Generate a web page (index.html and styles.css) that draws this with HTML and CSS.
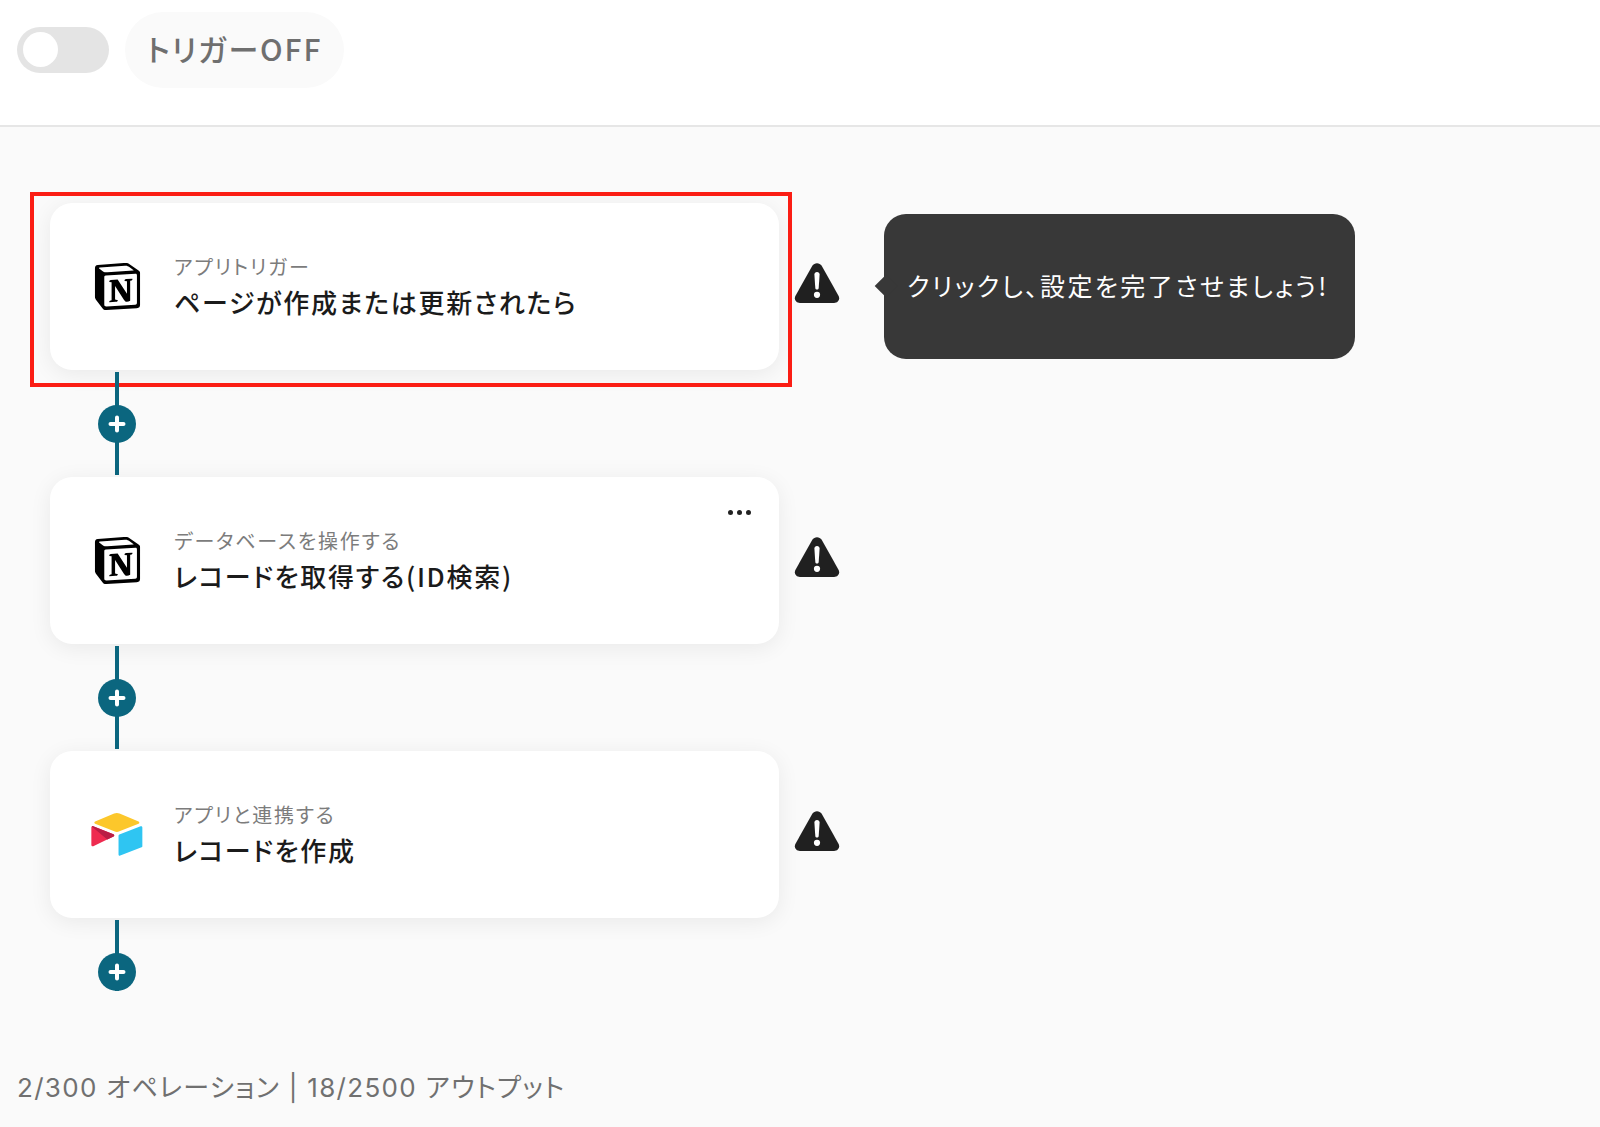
FILE: index.html
```html
<!DOCTYPE html>
<html lang="ja">
<head>
<meta charset="utf-8">
<title>フロー</title>
<link rel="stylesheet" href="styles.css">
</head>
<body>
<svg class="defs" width="0" height="0" aria-hidden="true">
  <symbol id="notion" viewBox="0 0 24 24"><path fill="#000" d="M4.459 4.208c.746.606 1.026.56 2.428.466l13.215-.793c.28 0 .047-.28-.046-.326L17.86 1.968c-.42-.326-.981-.7-2.055-.607L3.01 2.295c-.466.046-.56.28-.374.466zm.793 3.08v13.904c0 .747.373 1.027 1.214.98l14.523-.84c.841-.046.935-.56.935-1.167V6.354c0-.606-.233-.933-.748-.887l-15.177.887c-.56.047-.747.327-.747.933zm14.337.745c.093.42 0 .84-.42.888l-.7.14v10.264c-.608.327-1.168.514-1.635.514-.748 0-.935-.234-1.495-.933l-4.577-7.186v6.952L12.21 19s0 .84-1.168.84l-3.222.186c-.093-.186 0-.653.327-.746l.84-.233V9.854L7.822 9.76c-.094-.42.14-1.026.793-1.073l3.456-.233 4.764 7.279v-6.44l-1.215-.14c-.093-.514.28-.887.747-.933zM1.936 1.035l13.31-.98c1.634-.14 2.055-.047 3.082.7l4.249 2.986c.7.513.934.653.934 1.213v16.378c0 1.026-.373 1.634-1.68 1.726l-15.458.934c-.98.047-1.448-.093-1.962-.747l-3.129-4.06c-.56-.747-.793-1.306-.793-1.96V2.667c0-.839.374-1.54 1.447-1.632z"/></symbol>
  <symbol id="warn" viewBox="0 0 46 46"><path fill="#202020" d="M18.300 2.800c2.100-3.500 7.300-3.500 9.400 0l16.800 30c1.900 3.500-.5 7.200-4.400 7.200H5.900c-3.900 0-6.300-3.700-4.400-7.200z"/><path fill="#fff" d="M20.400 11.500c0-1.500 1.100-2.600 2.600-2.600s2.600 1.100 2.600 2.600l-.9 13.500c-.1 1-.8 1.500-1.700 1.500s-1.600-.5-1.700-1.500z"/><circle fill="#fff" cx="23" cy="31.800" r="3.100"/></symbol>
  <symbol id="plus" viewBox="0 0 38 38"><circle cx="19" cy="19" r="19" fill="#0b667f"/><path d="M19 12.500v13M12.500 19h13" stroke="#fff" stroke-width="4" stroke-linecap="round" fill="none"/></symbol>
</svg>

<header class="topbar">
  <div class="toggle"><span class="knob"></span></div>
  <div class="status-pill">トリガーOFF</div>
</header>

<main class="canvas">
  <section class="flow">
    <div class="step">
      <div class="card card-selected">
        <div class="card-icon"><svg class="logo-notion"><use href="#notion"/></svg></div>
        <div class="card-text">
          <div class="card-sub">アプリトリガー</div>
          <div class="card-title">ページが作成または更新されたら</div>
        </div>
      </div>
      <svg class="warn"><use href="#warn"/></svg>
      <div class="tooltip">クリックし、設定を完了させましょう!</div>
    </div>
    <div class="connector"><svg class="plus"><use href="#plus"/></svg></div>

    <div class="step">
      <div class="card">
        <div class="card-icon"><svg class="logo-notion"><use href="#notion"/></svg></div>
        <div class="card-text">
          <div class="card-sub">データベースを操作する</div>
          <div class="card-title">レコードを取得する(ID検索)</div>
        </div>
        <div class="menu-dots"><span></span><span></span><span></span></div>
      </div>
      <svg class="warn"><use href="#warn"/></svg>
    </div>
    <div class="connector"><svg class="plus"><use href="#plus"/></svg></div>

    <div class="step">
      <div class="card">
        <div class="card-icon">
          <svg class="logo-airtable" viewBox="0 0 200 170">
            <path fill="#fcc72b" d="M90.039 12.368 24.079 39.66c-3.667 1.519-3.63 6.729.062 8.192l66.235 26.266a24.58 24.58 0 0 0 18.12 0l66.236-26.266c3.69-1.463 3.729-6.673.062-8.192l-65.96-27.292a24.58 24.58 0 0 0-18.795 0"/>
            <path fill="#2fc5f2" d="M105.312 88.46v65.617c0 3.12 3.147 5.258 6.048 4.108l73.806-28.648a4.42 4.42 0 0 0 2.79-4.108V60.813c0-3.121-3.147-5.258-6.048-4.108l-73.806 28.648a4.42 4.42 0 0 0-2.79 4.108"/>
            <path fill="#ee2b50" d="M88.078 91.846l-21.904 10.576-2.224 1.075-46.238 22.155c-2.93 1.414-6.672-.722-6.672-3.978V60.088c0-1.178.604-2.195 1.414-2.96a5 5 0 0 1 1.12-.84c1.104-.663 2.68-.84 4.02-.31L87.71 83.76c3.564 1.414 3.844 6.408.368 8.087"/>
            <path fill="#ba1e45" d="M88.078 91.846l-21.904 10.576-53.72-45.295a5 5 0 0 1 1.12-.84c1.104-.663 2.68-.84 4.02-.31L87.71 83.76c3.564 1.414 3.844 6.408.368 8.087"/>
          </svg>
        </div>
        <div class="card-text">
          <div class="card-sub">アプリと連携する</div>
          <div class="card-title">レコードを作成</div>
        </div>
      </div>
      <svg class="warn"><use href="#warn"/></svg>
    </div>
    <div class="connector connector-end"><svg class="plus"><use href="#plus"/></svg></div>
  </section>

  <footer class="usage">2/300 オペレーション | 18/2500 アウトプット</footer>
</main>
</body>
</html>
```

FILE: styles.css
```css
* { box-sizing: border-box; }

html, body {
  margin: 0;
  height: 100%;
  overflow: hidden;
}

body {
  display: flex;
  flex-direction: column;
  background: #fafafa;
  font-family: "Noto Sans CJK JP", "Noto Sans", sans-serif;
  font-feature-settings: "palt";
  color: #1b1b1b;
}

.defs { position: absolute; }

.topbar {
  flex: none;
  height: 127px;
  display: flex;
  align-items: flex-start;
  gap: 16px;
  padding: 12px 0 0 17px;
  background: #fff;
  border-bottom: 2px solid #e6e6e6;
}

.toggle {
  width: 92px;
  height: 46px;
  margin-top: 15px;
  padding: 5px 6px;
  border-radius: 23px;
  background: #e4e4e4;
}

.knob {
  display: block;
  width: 35px;
  height: 35px;
  border-radius: 50%;
  background: #fff;
}

.status-pill {
  width: 219px;
  height: 76px;
  border-radius: 38px;
  background: #fafafa;
  color: #6f6f6f;
  font-size: 30px;
  font-weight: 500;
  line-height: 72px;
  letter-spacing: 1.900px;
  text-align: center;
}

.canvas {
  flex: 1;
  display: flex;
  flex-direction: column;
  padding: 76px 0 0 50px;
}

.flow {
  display: flex;
  flex-direction: column;
}

.step {
  display: flex;
  align-items: center;
  height: 167px;
}

.card {
  position: relative;
  flex: none;
  width: 729px;
  height: 167px;
  display: flex;
  align-items: center;
  gap: 31px;
  padding-left: 41px;
  border-radius: 22px;
  background: #fff;
  box-shadow: 0 4px 22px rgba(0, 0, 0, 0.07);
}

.card-selected::after {
  content: "";
  position: absolute;
  inset: -11px -13px -17px -20px;
  border: 4px solid #fb1d14;
}

.card-icon {
  flex: none;
  width: 52px;
  display: flex;
  justify-content: center;
}

.logo-notion {
  flex: none;
  width: 47px;
  height: 47px;
}

.logo-airtable {
  flex: none;
  width: 58px;
  height: 49px;
}

.card-text {
  display: flex;
  flex-direction: column;
  gap: 1.500px;
}

.card-sub {
  font-size: 20px;
  line-height: 30px;
  color: #7c7c7c;
  letter-spacing: 1.800px;
}

.card-title {
  font-size: 26px;
  font-weight: 500;
  line-height: 38px;
  letter-spacing: 1.700px;
  color: #1b1b1b;
}

.menu-dots {
  position: absolute;
  top: 33px;
  right: 28px;
  display: flex;
  gap: 4px;
}

.menu-dots span {
  width: 5px;
  height: 5px;
  border-radius: 50%;
  background: #222;
}

.warn {
  flex: none;
  width: 46px;
  height: 46px;
  margin-left: 15px;
  margin-top: -1px;
}

.tooltip {
  position: relative;
  width: 471px;
  height: 145px;
  margin-left: 44px;
  margin-top: -1px;
  padding: 0 0 3px 23px;
  display: flex;
  align-items: center;
  border-radius: 22px;
  background: #383838;
  color: #fff;
  font-size: 25px;
  letter-spacing: 2.400px;
}

.tooltip::before {
  content: "";
  position: absolute;
  left: -6px;
  top: 64px;
  width: 16px;
  height: 16px;
  background: #383838;
  transform: rotate(45deg);
}

.connector {
  position: relative;
  width: 4px;
  height: 103px;
  margin: 2px 0 2px 65px;
  display: flex;
  align-items: center;
  justify-content: center;
  background: #0b667f;
}

.connector-end {
  height: 71px;
  margin-bottom: 0;
  align-items: flex-end;
}

.plus {
  flex: none;
  width: 38px;
  height: 38px;
}

.usage {
  margin: 77px 0 0 -33px;
  font-family: Inter, "Noto Sans CJK JP", sans-serif;
  font-size: 26px;
  line-height: 40px;
  color: #707070;
  letter-spacing: 1.300px;
}
```
